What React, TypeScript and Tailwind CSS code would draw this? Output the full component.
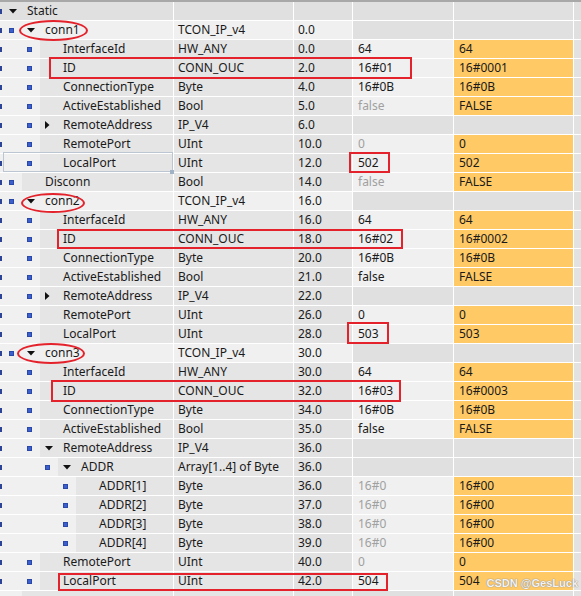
import React from "react";

type Kind = "head" | "conn" | "struct" | "leaf" | "tail";

type Row = {
  n: string;
  l: number;
  k: Kind;
  t?: string;
  o?: string;
  s?: string;
  m?: string;
  a?: "down" | "right";
  dim?: boolean;
};

const rows: Row[] = [
  { n: "Static", l: 0, k: "head", a: "down" },
  { n: "conn1", l: 1, k: "conn", a: "down", t: "TCON_IP_v4", o: "0.0" },
  { n: "InterfaceId", l: 2, k: "leaf", t: "HW_ANY", o: "0.0", s: "64", m: "64" },
  { n: "ID", l: 2, k: "leaf", t: "CONN_OUC", o: "2.0", s: "16#01", m: "16#0001" },
  { n: "ConnectionType", l: 2, k: "leaf", t: "Byte", o: "4.0", s: "16#0B", m: "16#0B" },
  { n: "ActiveEstablished", l: 2, k: "leaf", t: "Bool", o: "5.0", s: "false", m: "FALSE", dim: true },
  { n: "RemoteAddress", l: 2, k: "struct", a: "right", t: "IP_V4", o: "6.0" },
  { n: "RemotePort", l: 2, k: "leaf", t: "UInt", o: "10.0", s: "0", m: "0", dim: true },
  { n: "LocalPort", l: 2, k: "leaf", t: "UInt", o: "12.0", s: "502", m: "502" },
  { n: "Disconn", l: 1, k: "leaf", t: "Bool", o: "14.0", s: "false", m: "FALSE", dim: true },
  { n: "conn2", l: 1, k: "conn", a: "down", t: "TCON_IP_v4", o: "16.0" },
  { n: "InterfaceId", l: 2, k: "leaf", t: "HW_ANY", o: "16.0", s: "64", m: "64" },
  { n: "ID", l: 2, k: "leaf", t: "CONN_OUC", o: "18.0", s: "16#02", m: "16#0002" },
  { n: "ConnectionType", l: 2, k: "leaf", t: "Byte", o: "20.0", s: "16#0B", m: "16#0B" },
  { n: "ActiveEstablished", l: 2, k: "leaf", t: "Bool", o: "21.0", s: "false", m: "FALSE" },
  { n: "RemoteAddress", l: 2, k: "struct", a: "right", t: "IP_V4", o: "22.0" },
  { n: "RemotePort", l: 2, k: "leaf", t: "UInt", o: "26.0", s: "0", m: "0" },
  { n: "LocalPort", l: 2, k: "leaf", t: "UInt", o: "28.0", s: "503", m: "503" },
  { n: "conn3", l: 1, k: "conn", a: "down", t: "TCON_IP_v4", o: "30.0" },
  { n: "InterfaceId", l: 2, k: "leaf", t: "HW_ANY", o: "30.0", s: "64", m: "64" },
  { n: "ID", l: 2, k: "leaf", t: "CONN_OUC", o: "32.0", s: "16#03", m: "16#0003" },
  { n: "ConnectionType", l: 2, k: "leaf", t: "Byte", o: "34.0", s: "16#0B", m: "16#0B" },
  { n: "ActiveEstablished", l: 2, k: "leaf", t: "Bool", o: "35.0", s: "false", m: "FALSE" },
  { n: "RemoteAddress", l: 2, k: "struct", a: "down", t: "IP_V4", o: "36.0" },
  { n: "ADDR", l: 3, k: "struct", a: "down", t: "Array[1..4] of Byte", o: "36.0" },
  { n: "ADDR[1]", l: 4, k: "leaf", t: "Byte", o: "36.0", s: "16#0", m: "16#00", dim: true },
  { n: "ADDR[2]", l: 4, k: "leaf", t: "Byte", o: "37.0", s: "16#0", m: "16#00", dim: true },
  { n: "ADDR[3]", l: 4, k: "leaf", t: "Byte", o: "38.0", s: "16#0", m: "16#00", dim: true },
  { n: "ADDR[4]", l: 4, k: "leaf", t: "Byte", o: "39.0", s: "16#0", m: "16#00", dim: true },
  { n: "RemotePort", l: 2, k: "leaf", t: "UInt", o: "40.0", s: "0", m: "0", dim: true },
  { n: "LocalPort", l: 2, k: "leaf", t: "UInt", o: "42.0", s: "504", m: "504" },
  { n: "", l: 1, k: "tail" },
];

const indentW: Record<number, string> = {
  1: "w-[22px]",
  2: "w-[40px]",
  3: "w-[58px]",
  4: "w-[76px]",
};

const tone: Record<Kind, { name: string; type: string; off: string; start: string; mon: string; last: string }> = {
  head: { name: "bg-[#e0e0e0]", type: "bg-[#e0e0e0]", off: "bg-[#e0e0e0]", start: "bg-[#e0e0e0]", mon: "bg-[#e0e0e0]", last: "bg-[#e0e0e0]" },
  conn: { name: "bg-[#f0f0f0]", type: "bg-[#f0f0f0]", off: "bg-[#f0f0f0]", start: "bg-[#e0e0e0]", mon: "bg-[#e0e0e0]", last: "bg-[#e0e0e0]" },
  struct: { name: "bg-[#e5e5e5]", type: "bg-[#e5e5e5]", off: "bg-[#e2e2e2]", start: "bg-[#e0e0e0]", mon: "bg-[#e0e0e0]", last: "bg-[#e2e2e2]" },
  leaf: { name: "bg-[#e5e5e5]", type: "bg-[#e5e5e5]", off: "bg-[#e2e2e2]", start: "bg-[#f0f0f0]", mon: "bg-[#ffc966]", last: "bg-[#e2e2e2]" },
  tail: { name: "bg-[#e5e5e5]", type: "bg-[#e5e5e5]", off: "bg-[#e2e2e2]", start: "bg-[#e0e0e0]", mon: "bg-[#e0e0e0]", last: "bg-[#e2e2e2]" },
};

function Arrow({ dir }: { dir: "down" | "right" }) {
  if (dir === "down")
    return (
      <svg width="8" height="5" viewBox="0 0 8 5" className="block">
        <polygon points="0,0 8,0 4,4.5" fill="#111" />
      </svg>
    );
  return (
    <svg width="5" height="8" viewBox="0 0 5 8" className="block">
      <polygon points="0,0 4.5,4 0,8" fill="#111" />
    </svg>
  );
}

function Sliver() {
  return <div className="w-[2px] h-[5px] shrink-0 bg-[#2c4396]" />;
}

function Marker() {
  return <div className="w-[5px] h-[5px] shrink-0 bg-[#3b5fcc] shadow-[inset_0_0_0_1px_#2a48a8]" />;
}

function TableRow({ r }: { r: Row }) {
  const c = tone[r.k];
  return (
    <div className="flex h-[18px] mb-px gap-px">
      <div className="flex w-[173px] shrink-0">
        {r.l === 0 ? (
          <div className={`flex flex-1 items-center ${c.name}`}>
            <Sliver />
            <div className="w-[25px] pl-[7px] shrink-0">{r.a && <Arrow dir={r.a} />}</div>
            <span>{r.n}</span>
          </div>
        ) : (
          <>
            <div className={`flex items-center shrink-0 bg-[#f0f0f0] ${indentW[r.l]}`}>
              <Sliver />
              <div className="ml-auto mr-[8px]">
                <Marker />
              </div>
            </div>
            <div className={`flex flex-1 items-center ${c.name}`}>
              <div className="w-[23px] pl-[5px] shrink-0 flex items-center">{r.a && <Arrow dir={r.a} />}</div>
              <span className="whitespace-nowrap">{r.n}</span>
            </div>
          </>
        )}
      </div>
      <div className={`w-[119px] shrink-0 pl-[4px] flex items-center whitespace-nowrap ${c.type}`}>{r.t}</div>
      <div className={`w-[58px] shrink-0 pl-[4px] flex items-center ${c.off}`}>{r.o}</div>
      <div className={`w-[100px] shrink-0 pl-[5px] flex items-center ${c.start} ${r.dim ? "text-[#a0a0a0]" : ""}`}>{r.s}</div>
      <div className={`w-[119px] shrink-0 pl-[5px] flex items-center ${c.mon}`}>{r.m}</div>
      <div className={`flex-1 ${c.last}`} />
    </div>
  );
}

export default function App() {
  return (
    <div className="relative w-[581px] h-[596px] overflow-hidden bg-white border-t-2 border-[#a8a8a8] font-['Noto_Sans',sans-serif] text-[12px] leading-none text-[#1a1a1a]">
      {rows.map((r, i) => (
        <TableRow key={i} r={r} />
      ))}

      {/* cell selection frame */}
      <div className="absolute left-[3px] top-[150px] w-[170px] h-[20px] border border-[#bcc6d2]" />
      <div className="absolute left-[170px] top-[168px] w-[4px] h-[4px] bg-[#a2b2c6]" />

      {/* red marks */}
      <div className="absolute left-[19px] top-[18px] w-[69px] h-[21px] rounded-[50%] border-2 border-[#e3222b]" />
      <div className="absolute left-[21px] top-[191px] w-[64px] h-[20px] rounded-[50%] border-2 border-[#e3222b]" />
      <div className="absolute left-[17px] top-[341px] w-[68px] h-[21px] rounded-[50%] border-2 border-[#e3222b]" />

      <div className="absolute left-[49px] top-[55px] w-[363px] h-[22px] border-2 border-[#e3222b]" />
      <div className="absolute left-[57px] top-[227px] w-[346px] h-[20px] border-2 border-[#e3222b]" />
      <div className="absolute left-[51px] top-[378px] w-[350px] h-[22px] border-2 border-[#e3222b]" />
      <div className="absolute left-[349px] top-[150px] w-[41px] h-[21px] border-2 border-[#e3222b]" />
      <div className="absolute left-[347px] top-[320px] w-[42px] h-[22px] border-2 border-[#e3222b]" />
      <div className="absolute left-[58px] top-[571px] w-[330px] h-[18px] border-2 border-[#e3222b]" />

      <div className="absolute right-[3px] bottom-[7px] font-['Liberation_Sans',sans-serif] text-[11px] font-bold text-white/90 [text-shadow:0_0_1px_#888,0_0_1px_#888]">
        CSDN @GesLuck
      </div>
    </div>
  );
}
